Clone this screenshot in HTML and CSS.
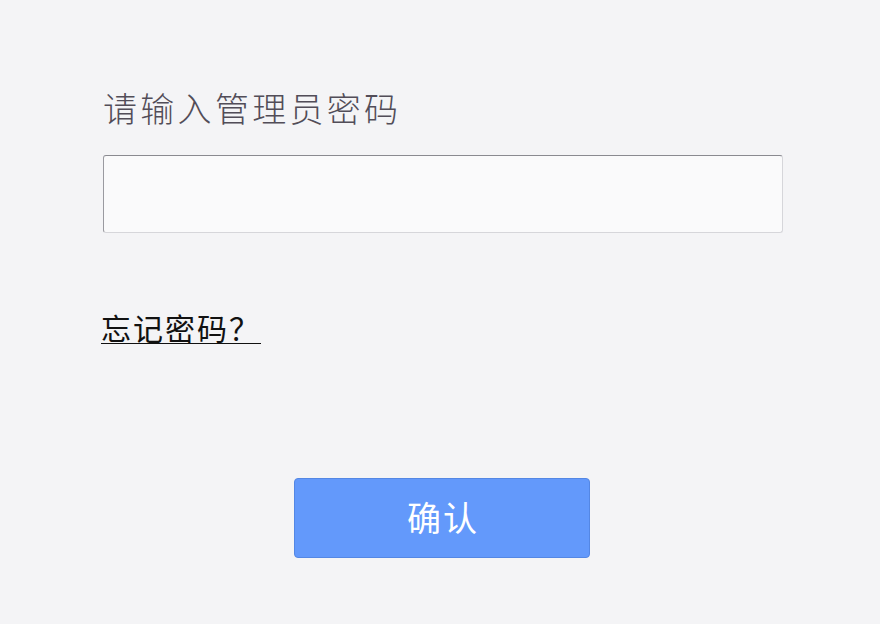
FILE: index.html
```html
<!DOCTYPE html>
<html lang="zh-CN">
<head>
<meta charset="utf-8">
<title>登录</title>
<link rel="stylesheet" href="styles.css">
</head>
<body>
<main class="page">
  <h1 class="title">请输入管理员密码</h1>
  <div class="field"><input class="password" type="password" aria-label="管理员密码"></div>
  <a class="forgot" href="#">忘记密码？</a>
  <div class="actions"><button class="confirm" type="button">确认</button></div>
</main>
</body>
</html>
```
FILE: styles.css
```css
html, body {
  margin: 0;
  padding: 0;
  background: #f4f4f6;
}
body {
  width: 880px;
  height: 624px;
  overflow: hidden;
  font-family: "Noto Sans CJK SC", "Noto Sans", sans-serif;
}
.page {
  display: flex;
  flex-direction: column;
  padding: 87px 97px 0 103px;
}
.title {
  margin: 0;
  font-size: 34px;
  line-height: 42px;
  font-weight: 300;
  letter-spacing: 3.3px;
  color: #524d58;
}
.field {
  margin-top: 26px;
}
.password {
  box-sizing: border-box;
  display: block;
  width: 680px;
  height: 78px;
  margin: 0;
  background: #fafafb;
  border: 1px solid #d6d6da;
  border-top-color: #8a8a90;
  border-left-color: #9a9aa0;
  border-radius: 3px;
  outline: none;
}
.forgot {
  align-self: flex-start;
  margin-top: 77px;
  margin-left: -2px;
  font-size: 30px;
  line-height: 34px;
  letter-spacing: 2px;
  color: #111;
  text-decoration: underline;
  text-underline-offset: 3px;
  text-decoration-thickness: 1px;
}
.actions {
  margin-top: 134px;
  padding-left: 191px;
}
.confirm {
  box-sizing: border-box;
  width: 296px;
  height: 80px;
  background: #6399fb;
  border: 1px solid #5487e4;
  border-radius: 4px;
  color: #fff;
  font-family: "Noto Sans CJK SC", sans-serif;
  font-size: 34px;
  letter-spacing: 2px;
  padding: 0 0 4px 2px;
}
```
